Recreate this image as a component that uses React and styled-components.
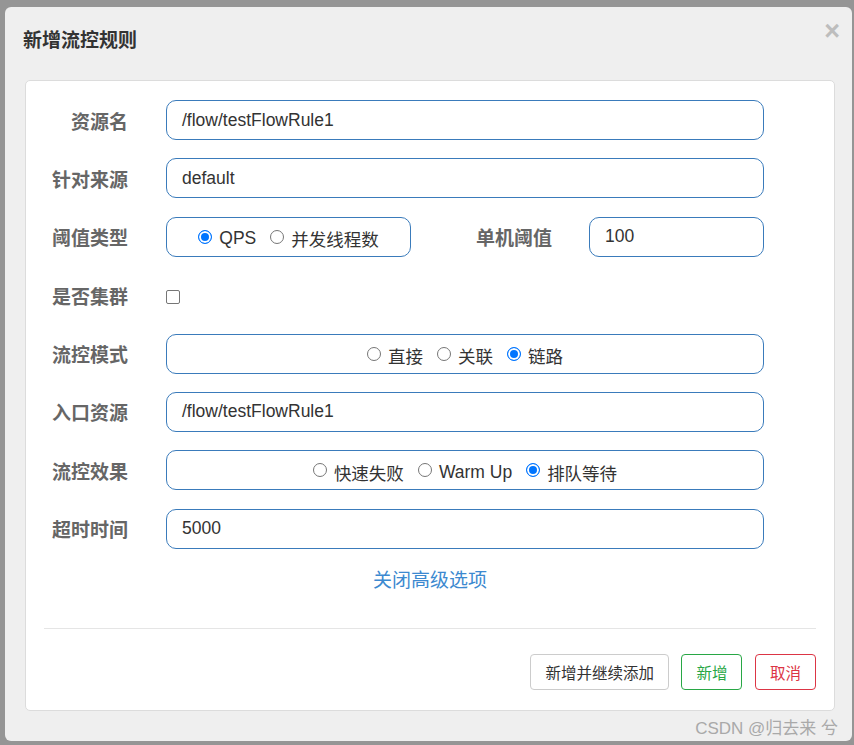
import React from "react";
import styled, { createGlobalStyle } from "styled-components";

const FONT = `"Liberation Sans", "Noto Sans CJK SC", sans-serif`;

const GlobalStyle = createGlobalStyle`
  html, body {
    margin: 0;
    padding: 0;
    background: #959595;
    font-family: ${FONT};
  }
  * {
    box-sizing: border-box;
  }
`;

const Backdrop = styled.div`
  width: 854px;
  height: 745px;
  padding: 7px 2px 4px 5px;
  overflow: hidden;
`;

const Modal = styled.div`
  width: 847px;
  height: 734px;
  background: #efefef;
  border-radius: 6px;
  display: flex;
  flex-direction: column;
`;

const Header = styled.div`
  height: 73px;
  display: flex;
  justify-content: space-between;
  padding: 0 12px 0 18px;
`;

const Title = styled.h4`
  margin: 0;
  margin-top: 22px;
  font-size: 19px;
  line-height: 24px;
  font-weight: bold;
  color: #333;
`;

const Close = styled.span`
  margin-top: 9px;
  font-size: 27px;
  line-height: 30px;
  font-weight: bold;
  color: #bdbdbd;
`;

const Card = styled.div`
  margin: 0 17px 0 20px;
  background: #fff;
  border: 1px solid #dcdcdc;
  border-radius: 5px;
  padding: 19px 0 20px;
`;

const Form = styled.div`
  display: flex;
  flex-direction: column;
  gap: 18.4px;
`;

const Row = styled.div`
  display: flex;
  align-items: center;
  height: 40px;
`;

const Label = styled.label`
  width: ${(p) => p.$width || 102}px;
  margin-right: ${(p) => p.$gap || 38}px;
  text-align: right;
  font-size: 19px;
  font-weight: bold;
  color: #666;
  white-space: nowrap;
  flex-shrink: 0;
`;

const Field = styled.div`
  width: ${(p) => p.$width || 598}px;
  height: 40px;
  border: 1px solid #3a7bbb;
  border-radius: 10px;
  display: flex;
  align-items: center;
  justify-content: ${(p) => (p.$center ? "center" : "flex-start")};
  padding: ${(p) => (p.$center ? "4px 15px 0" : "0 15px")};
  font-size: 17.5px;
  color: #333;
  gap: 14px;
  flex-shrink: 0;
`;

const Option = styled.span`
  display: inline-flex;
  align-items: center;
  font-size: 17.5px;
  color: #333;
  white-space: nowrap;
`;

const Radio = styled.span`
  width: 14px;
  height: 14px;
  border-radius: 50%;
  margin-right: 7px;
  margin-top: -4px;
  border: 1px solid ${(p) => (p.$on ? "#0075ff" : "#767676")};
  background: ${(p) => (p.$on ? "#0075ff" : "#fff")};
  box-shadow: ${(p) => (p.$on ? "inset 0 0 0 2px #fff" : "none")};
  flex-shrink: 0;
`;

const Check = styled.span`
  width: 14px;
  height: 14px;
  margin-top: 3px;
  border: 1px solid #767676;
  border-radius: 2px;
  background: #fff;
`;

const LinkRow = styled.div`
  margin-top: 20px;
  text-align: center;
`;

const ToggleLink = styled.a`
  font-size: 19px;
  line-height: 24px;
  color: #3c89d0;
`;

const Divider = styled.hr`
  margin: 35px 18px 0;
  border: 0;
  border-top: 1px solid #e5e5e5;
`;

const Actions = styled.div`
  display: flex;
  justify-content: flex-end;
  gap: 12.5px;
  margin: 25px 18px 0;
`;

const Button = styled.button`
  height: 36px;
  padding: 0 14px;
  font-family: ${FONT};
  font-size: 15.5px;
  background: #fff;
  border-radius: 4px;
  border: 1px solid ${(p) => p.$color || "#ccc"};
  color: ${(p) => p.$text || "#333"};
`;

const Footer = styled.div`
  flex: 1;
  display: flex;
  justify-content: flex-end;
  align-items: center;
  padding: 2px 14px 0 0;
  font-size: 17px;
  color: #a9a9a9;
`;

const RadioGroup = ({ options, checked, width }) => (
  <Field $center $width={width}>
    {options.map((o) => (
      <Option key={o}>
        <Radio $on={o === checked} />
        {o}
      </Option>
    ))}
  </Field>
);

export default function App() {
  return (
    <>
      <GlobalStyle />
      <Backdrop>
        <Modal>
          <Header>
            <Title>新增流控规则</Title>
            <Close>×</Close>
          </Header>
          <Card>
            <Form>
              <Row>
                <Label>资源名</Label>
                <Field>/flow/testFlowRule1</Field>
              </Row>
              <Row>
                <Label>针对来源</Label>
                <Field>default</Field>
              </Row>
              <Row>
                <Label>阈值类型</Label>
                <RadioGroup
                  width={245}
                  options={["QPS", "并发线程数"]}
                  checked="QPS"
                />
                <Label $width={141} $gap={37}>
                  单机阈值
                </Label>
                <Field $width={175}>100</Field>
              </Row>
              <Row>
                <Label>是否集群</Label>
                <Check />
              </Row>
              <Row>
                <Label>流控模式</Label>
                <RadioGroup options={["直接", "关联", "链路"]} checked="链路" />
              </Row>
              <Row>
                <Label>入口资源</Label>
                <Field>/flow/testFlowRule1</Field>
              </Row>
              <Row>
                <Label>流控效果</Label>
                <RadioGroup
                  options={["快速失败", "Warm Up", "排队等待"]}
                  checked="排队等待"
                />
              </Row>
              <Row>
                <Label>超时时间</Label>
                <Field>5000</Field>
              </Row>
            </Form>
            <LinkRow>
              <ToggleLink>关闭高级选项</ToggleLink>
            </LinkRow>
            <Divider />
            <Actions>
              <Button>新增并继续添加</Button>
              <Button $color="#28a745" $text="#28a745">
                新增
              </Button>
              <Button $color="#dc3545" $text="#dc3545">
                取消
              </Button>
            </Actions>
          </Card>
          <Footer>CSDN @归去来 兮</Footer>
        </Modal>
      </Backdrop>
    </>
  );
}
